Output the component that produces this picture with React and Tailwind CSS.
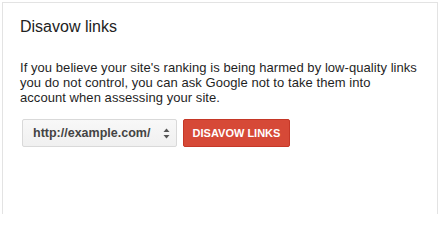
const App = () => {
  return (
    <div className="w-[441px] h-[214px] bg-white overflow-hidden font-['Liberation_Sans',Arial,sans-serif]">
      <div className="mt-[2px] ml-[2px] w-[436px] h-[212px] border border-b-0 border-[#e3e3e3] pl-[17px] pt-[14px]">
        <h1 className="text-[16px] leading-[20px] text-[#222]">Disavow links</h1>
        <p className="mt-[23px] text-[13px] leading-[15px] tracking-[0.06px] text-[#1f1f1f]">
          If you believe your site's ranking is being harmed by low-quality links
          <br />
          you do not control, you can ask Google not to take them into
          <br />
          account when assessing your site.
        </p>
        <div className="mt-[14px] ml-[2px] flex items-center gap-[6px]">
          <div className="w-[155px] h-[28px] flex items-center justify-between pl-[10px] pr-[6px] border border-[#d9d9d9] rounded-[2px] bg-gradient-to-b from-[#f8f8f8] to-[#f0f0f0]">
            <span className="text-[12.5px] font-bold text-[#444]">http://example.com/</span>
            <svg width="7" height="11" viewBox="0 0 7 11" className="text-[#555]">
              <path d="M3.5 0.5 L6.5 4 L0.5 4 Z" fill="currentColor" />
              <path d="M3.5 10.5 L6.5 7 L0.5 7 Z" fill="currentColor" />
            </svg>
          </div>
          <button className="w-[107px] h-[28px] rounded-[2px] border border-[#c53727] bg-[#d64937] text-white text-[11px] font-bold">
            DISAVOW LINKS
          </button>
        </div>
      </div>
    </div>
  )
}
export default App
